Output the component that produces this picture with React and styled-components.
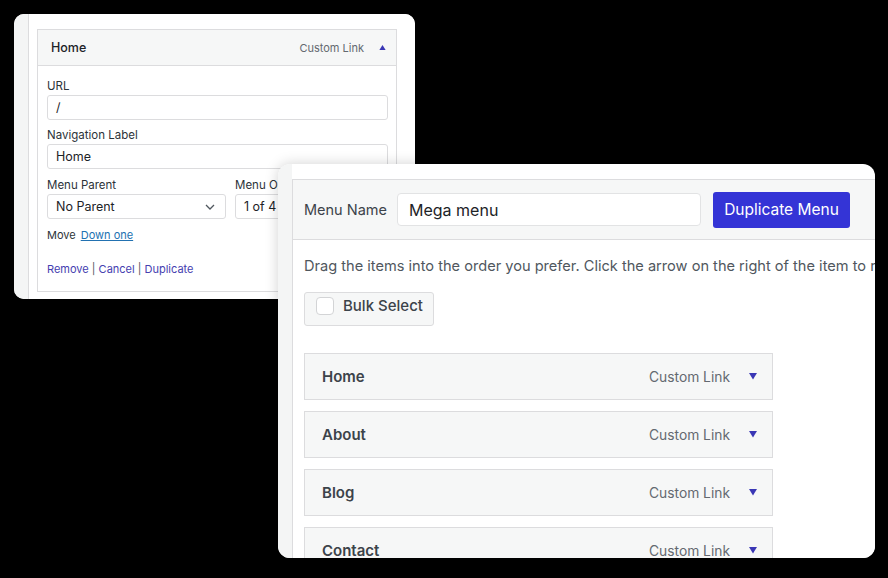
import styled, { createGlobalStyle } from 'styled-components';

const GlobalStyle = createGlobalStyle`
	html, body {
		margin: 0;
		padding: 0;
		background: #000;
	}
	body {
		font-family: Inter, "Noto Sans", "Liberation Sans", sans-serif;
		-webkit-font-smoothing: antialiased;
	}
`;

const Stage = styled.main`
	position: relative;
	width: 888px;
	height: 578px;
	background: #000;
	overflow: hidden;
`;

const Window = styled.section`
	position: absolute;
	left: ${(p) => p.$x}px;
	top: ${(p) => p.$y}px;
	width: ${(p) => p.$w}px;
	height: ${(p) => p.$h}px;
	box-sizing: border-box;
	display: flex;
	background: #fff;
	border-radius: ${(p) => p.$radius}px;
	overflow: hidden;
	box-shadow: 0 0 14px rgba(0, 0, 0, 0.18);
`;

const Gutter = styled.div`
	flex: 0 0 14px;
	background: #f4f5f5;
`;

const Panel = styled.div`
	flex: 1;
	min-width: 0;
	display: flex;
	flex-direction: column;
	border-left: 1px solid #dcdcde;
	border-top: ${(p) => (p.$topBorder ? '1px solid #dcdcde' : 'none')};
	margin-top: ${(p) => p.$offset || 0}px;
	background: #fff;
`;

/* ---------- edit card (back window) ---------- */

const ItemBox = styled.div`
	margin: 15px 18px 0 8px;
	border: 1px solid #dcdcde;
`;

const ItemHead = styled.div`
	height: 35px;
	display: flex;
	align-items: center;
	padding: 0 10px 0 13px;
	background: #f6f7f7;
	border-bottom: 1px solid #dcdcde;
	font-size: 12.5px;
	font-weight: 500;
	color: #1d2327;
`;

const ItemType = styled.span`
	margin-left: auto;
	font-size: 11px;
	font-weight: 400;
	color: #646970;
	margin-right: ${(p) => p.$gap}px;
`;

const ItemBody = styled.div`
	display: flex;
	flex-direction: column;
	padding: 12px 8px 14px 9px;
`;

const Label = styled.label`
	display: block;
	font-size: 11.5px;
	line-height: 16px;
	color: #2c3338;
	margin-top: ${(p) => p.$top || 0}px;
	margin-bottom: 1px;
	white-space: nowrap;
`;

const TextInput = styled.div`
	box-sizing: border-box;
	height: 25px;
	display: flex;
	align-items: center;
	padding: 0 8px;
	border: 1px solid #dcdcde;
	border-radius: 3px;
	background: #fff;
	font-size: 12.5px;
	color: #1d2327;
`;

const SelectRow = styled.div`
	display: grid;
	grid-template-columns: 179px 1fr;
	gap: 9px;
`;

const Select = styled(TextInput)`
	justify-content: space-between;
	padding: 0 10px 0 8px;
`;

const MoveLine = styled.div`
	margin-top: 8px;
	font-size: 11px;
	line-height: 16px;
	color: #2c3338;
	display: flex;
	gap: 5px;
`;

const Underlined = styled.span`
	color: #2271b1;
	text-decoration: underline;
`;

const ActionLine = styled.div`
	margin-top: 18px;
	font-size: 11px;
	line-height: 16px;
	color: #50575e;
`;

const ActionLink = styled.span`
	color: #4540b0;
`;

/* ---------- menu structure card (front window) ---------- */

const Header = styled.div`
	height: 59px;
	flex: 0 0 59px;
	display: flex;
	align-items: center;
	padding-left: 11px;
	background: #f6f7f7;
	border-bottom: 1px solid #dcdcde;
`;

const HeaderLabel = styled.span`
	font-size: 14.5px;
	color: #3c434a;
	margin-right: 10px;
	white-space: nowrap;
`;

const NameInput = styled.div`
	box-sizing: border-box;
	width: 304px;
	height: 33px;
	display: flex;
	align-items: center;
	padding: 0 11px;
	background: #fff;
	border: 1px solid #e2e3e4;
	border-radius: 4px;
	font-size: 16px;
	color: #1d2327;
`;

const PrimaryButton = styled.button`
	margin-left: 12px;
	width: 137px;
	height: 36px;
	border: none;
	border-radius: 3px;
	background: #3434d6;
	color: #fff;
	font-family: inherit;
	font-size: 15.5px;
	white-space: nowrap;
	padding: 0;
`;

const Content = styled.div`
	padding: 16px 0 0 11px;
	display: flex;
	flex-direction: column;
	align-items: flex-start;
`;

const Hint = styled.p`
	margin: 0;
	font-size: 14.6px;
	line-height: 20px;
	color: #50575e;
	white-space: nowrap;
`;

const BulkButton = styled.div`
	box-sizing: border-box;
	margin-top: 16px;
	width: 130px;
	height: 34px;
	display: flex;
	align-items: flex-start;
	padding: 3px 0 0 11px;
	gap: 9px;
	background: #f6f7f7;
	border: 1px solid #dcdcde;
	border-radius: 3px;
	font-size: 15px;
	font-weight: 500;
	line-height: 20px;
	color: #3c434a;
`;

const Checkbox = styled.span`
	box-sizing: border-box;
	width: 18px;
	height: 18px;
	margin-top: 1px;
	border: 1px solid #d3d4d6;
	border-radius: 4px;
	background: #fff;
`;

const ItemList = styled.ul`
	list-style: none;
	margin: 27px 0 0;
	padding: 0;
	display: flex;
	flex-direction: column;
	gap: 11px;
`;

const MenuItem = styled.li`
	box-sizing: border-box;
	width: 469px;
	height: 47px;
	display: flex;
	align-items: center;
	padding: 0 15px 0 17px;
	background: #f6f7f7;
	border: 1px solid #dcdcde;
	font-size: 15px;
	font-weight: 600;
	color: #3c434a;
`;

const MenuItemType = styled.span`
	margin-left: auto;
	margin-right: 19px;
	font-size: 13.8px;
	font-weight: 400;
	color: #646970;
`;

const Triangle = ({ up, size = 8, color = '#3a37b5' }) => (
	<svg width={size} height={size * 0.8} viewBox="0 0 10 8" aria-hidden="true">
		{up ? <polygon points="5,0 10,8 0,8" fill={color} /> : <polygon points="0,0 10,0 5,8" fill={color} />}
	</svg>
);

const Chevron = () => (
	<svg width="10" height="6" viewBox="0 0 10 6" aria-hidden="true">
		<polyline points="1,1 5,5 9,1" fill="none" stroke="#50575e" strokeWidth="1.3" />
	</svg>
);

const items = ['Home', 'About', 'Blog', 'Contact'];

export default function App() {
	return (
		<>
			<GlobalStyle />
			<Stage>
				<Window $x={14} $y={14} $w={401} $h={285} $radius={10}>
					<Gutter />
					<Panel>
						<ItemBox>
							<ItemHead>
								Home
								<ItemType $gap={15}>Custom Link</ItemType>
								<Triangle up size={7} />
							</ItemHead>
							<ItemBody>
								<Label>URL</Label>
								<TextInput>/</TextInput>
								<Label $top={7}>Navigation Label</Label>
								<TextInput>Home</TextInput>
								<SelectRow>
									<div>
										<Label $top={8}>Menu Parent</Label>
										<Select>
											No Parent
											<Chevron />
										</Select>
									</div>
									<div>
										<Label $top={8}>Menu Order</Label>
										<Select>1 of 4</Select>
									</div>
								</SelectRow>
								<MoveLine>
									Move <Underlined>Down one</Underlined>
								</MoveLine>
								<ActionLine>
									<ActionLink>Remove</ActionLink> | <ActionLink>Cancel</ActionLink> |{' '}
									<ActionLink>Duplicate</ActionLink>
								</ActionLine>
							</ItemBody>
						</ItemBox>
					</Panel>
				</Window>

				<Window $x={278} $y={164} $w={597} $h={394} $radius={12}>
					<Gutter />
					<Panel $topBorder $offset={15}>
						<Header>
							<HeaderLabel>Menu Name</HeaderLabel>
							<NameInput>Mega menu</NameInput>
							<PrimaryButton>Duplicate Menu</PrimaryButton>
						</Header>
						<Content>
							<Hint>
								Drag the items into the order you prefer. Click the arrow on the right of the item to reveal
								additional configuration options.
							</Hint>
							<BulkButton>
								<Checkbox />
								Bulk Select
							</BulkButton>
							<ItemList>
								{items.map((name) => (
									<MenuItem key={name}>
										{name}
										<MenuItemType>Custom Link</MenuItemType>
										<Triangle />
									</MenuItem>
								))}
							</ItemList>
						</Content>
					</Panel>
				</Window>
			</Stage>
		</>
	);
}
